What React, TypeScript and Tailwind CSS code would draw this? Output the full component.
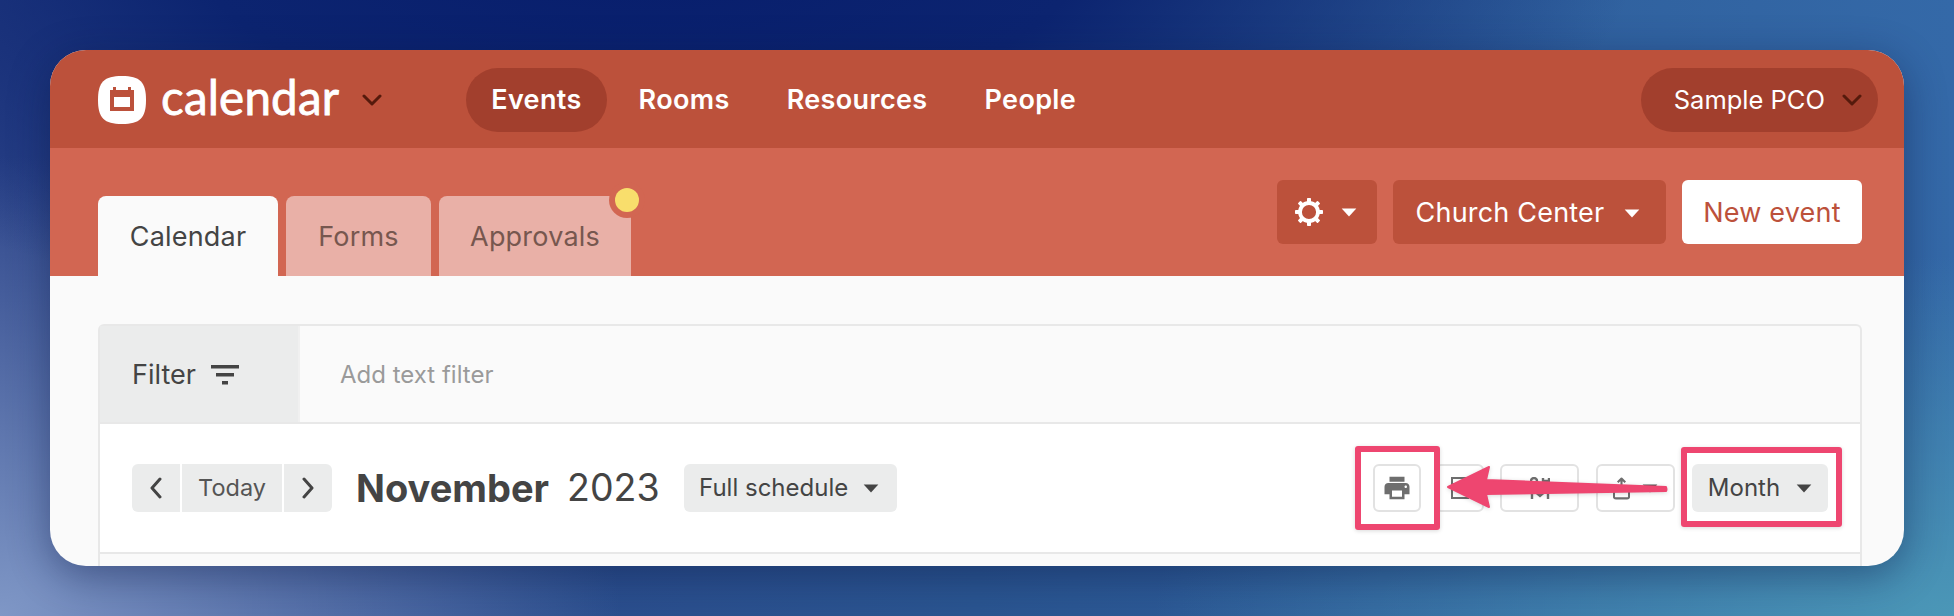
import React from "react";
import { MdPrint } from "react-icons/md";

const font = { fontFamily: "Inter, 'Liberation Sans', sans-serif" };

function Caret({ className }: { className: string }) {
  return (
    <svg viewBox="0 0 14 8" className={className} fill="currentColor">
      <path d="M0.5 0.5h13L7 7.5z" />
    </svg>
  );
}

function Chevron({ className }: { className: string }) {
  return (
    <svg viewBox="0 0 20 12" className={className} fill="none" stroke="currentColor" strokeWidth="3" strokeLinecap="round" strokeLinejoin="round">
      <path d="M2 2l8 8 8-8" />
    </svg>
  );
}

function Gear({ className }: { className: string }) {
  const angles = [0, 45, 90, 135, 180, 225, 270, 315];
  return (
    <svg viewBox="0 0 28 28" className={className} fill="currentColor">
      <circle cx="14" cy="14" r="9" fill="none" stroke="currentColor" strokeWidth="3.8" />
      {angles.map((a) => (
        <rect key={a} x="12" y="0" width="4" height="4.5" rx="0.8" transform={`rotate(${a} 14 14)`} />
      ))}
    </svg>
  );
}

function NavItem({ label, active }: { label: string; active?: boolean }) {
  return (
    <div className={`flex h-16 items-center rounded-full px-[25px] text-[27px] font-semibold tracking-[0.35px] text-white ${active ? "bg-[#a23f2d]" : ""}`}>
      {label}
    </div>
  );
}

function Tab({ label, className, children }: { label: string; className: string; children?: React.ReactNode }) {
  return (
    <div className={`relative flex h-20 items-center justify-center rounded-t-[8px] pt-[2px] text-[27px] tracking-[0.2px] ${className}`}>
      {label}
      {children}
    </div>
  );
}

function OutlineBtn({ className, children }: { className: string; children: React.ReactNode }) {
  return (
    <div className={`flex h-12 items-center justify-center rounded-[6px] border-2 border-[#e2e2e2] bg-white text-[#6e6e6e] ${className}`}>
      {children}
    </div>
  );
}

export default function App() {
  return (
    <div
      style={font}
      className="h-[616px] w-[1954px] overflow-hidden bg-[radial-gradient(ellipse_1000px_400px_at_640px_-60px,#071d6c_0%,#0c2470_45%,rgba(12,36,112,0)_100%),radial-gradient(ellipse_620px_460px_at_0px_616px,#7f97c6_0%,rgba(127,151,198,0)_100%),radial-gradient(ellipse_800px_360px_at_1954px_616px,#4b97b7_0%,rgba(75,151,183,0)_100%),linear-gradient(90deg,#2c4489_0%,#2a5590_50%,#3469a8_100%)] pt-[50px]"
    >
      <div className="relative mx-[50px] flex h-[516px] w-[1854px] flex-col overflow-hidden rounded-[36px] bg-[#fafafa] shadow-[0_10px_40px_rgba(10,25,70,0.45)]">
        {/* top nav */}
        <div className="flex h-[98px] shrink-0 items-center bg-[#bc513b] pl-[48px] pr-[26px] pt-[2px]">
          <svg viewBox="0 0 48 48" className="h-12 w-12 shrink-0">
            <path fill="#ffffff" d="M24 0C42 0 48 6 48 24C48 42 42 48 24 48C6 48 0 42 0 24C0 6 6 0 24 0Z" />
            <path fill="#bc513b" fillRule="evenodd" d="M15 11h3v3h12v-3h3v3h3v21H12V14h3zM16 21v10h16V21z" />
          </svg>
          <div className="mb-[6px] ml-[15px] text-[47.5px] font-normal leading-none tracking-[0.2px] text-white [-webkit-text-stroke:0.8px_white]" style={{ fontFamily: "Lato, sans-serif" }}>
            calendar
          </div>
          <Chevron className="ml-[23px] h-3 w-5 text-[#551a0c]" />
          <div className="ml-[84px] flex gap-[7px]">
            <NavItem label="Events" active />
            <NavItem label="Rooms" />
            <NavItem label="Resources" />
            <NavItem label="People" />
          </div>
          <div className="ml-auto flex h-16 items-center rounded-full bg-[#a23f2d] pl-[33px] pr-4 text-[25.5px] text-white">
            Sample PCO
            <Chevron className="ml-[17px] h-3 w-5 text-[#551a0c]" />
          </div>
        </div>

        {/* sub header */}
        <div className="flex h-[128px] shrink-0 items-end justify-between bg-[#d26652] pl-[48px] pr-[42px]">
          <div className="flex gap-2">
            <Tab label="Calendar" className="w-[180px] bg-[#fafafa] text-[#444444]" />
            <Tab label="Forms" className="w-[145px] bg-[#e9b0a7] text-[#77574f]" />
            <Tab label="Approvals" className="w-[192px] bg-[#e9b0a7] text-[#77574f]">
              <span className="absolute right-[-14px] top-[-14px] flex h-9 w-9 items-center justify-center rounded-full bg-[#d26652]">
                <span className="h-6 w-6 rounded-full bg-[#f8de6c]" />
              </span>
            </Tab>
          </div>
          <div className="mb-8 flex gap-4">
            <div className="flex h-16 w-[100px] items-center justify-center gap-[18px] rounded-[6px] bg-[#bc513b] pr-[2px] text-white">
              <Gear className="h-[28px] w-[28px]" />
              <Caret className="h-[9px] w-4" />
            </div>
            <div className="flex h-16 w-[273px] items-center justify-center gap-5 rounded-[6px] bg-[#bc513b] pr-[3px] pt-[2px] text-[27px] tracking-[0.2px] text-white">
              Church Center
              <Caret className="h-[9px] w-4" />
            </div>
            <div className="flex h-16 w-[180px] items-center justify-center rounded-[6px] bg-white pt-[2px] text-[27px] tracking-[0.2px] text-[#bc513b]">
              New event
            </div>
          </div>
        </div>

        {/* content */}
        <div className="flex-1 pl-[48px] pr-[42px] pt-12">
          <div className="h-[300px] rounded-t-[6px] border-2 border-b-0 border-[#e8e8e8]">
            <div className="flex h-[98px] border-b-2 border-[#e8e8e8]">
              <div className="flex w-[200px] items-center gap-[15px] border-r-2 border-[#f0f0f0] bg-[#ebecec] pl-[32px] pt-[2px] text-[27px] text-[#444444]">
                Filter
                <svg viewBox="0 0 28 20" className="h-5 w-7" fill="currentColor">
                  <rect x="0" y="0" width="28" height="3.5" />
                  <rect x="5" y="8" width="18" height="3.5" />
                  <rect x="11" y="16" width="6" height="3.5" />
                </svg>
              </div>
              <div className="flex items-center pl-[40px] pt-[2px] text-[24px] text-[#9a9a9a]">Add text filter</div>
            </div>
            <div className="flex h-[130px] items-center border-b-2 border-[#e8e8e8] bg-white pl-[32px] pr-[32px] text-[#444444]">
              <div className="flex h-12 gap-[2px] overflow-hidden rounded-[6px]">
                <div className="flex w-12 items-center justify-center bg-[#ebecec]">
                  <svg viewBox="0 0 12 22" className="h-[22px] w-3" fill="none" stroke="currentColor" strokeWidth="3" strokeLinecap="round" strokeLinejoin="round"><path d="M10 2L2 11l8 9" /></svg>
                </div>
                <div className="flex w-[100px] items-center justify-center bg-[#ebecec] text-[23.5px] text-[#555555]">Today</div>
                <div className="flex w-12 items-center justify-center bg-[#ebecec]">
                  <svg viewBox="0 0 12 22" className="h-[22px] w-3" fill="none" stroke="currentColor" strokeWidth="3" strokeLinecap="round" strokeLinejoin="round"><path d="M2 2l8 9-8 9" /></svg>
                </div>
              </div>
              <div className="ml-[24px] text-[38px] font-bold">November</div>
              <div className="ml-[18px] text-[37.5px]">2023</div>
              <div className="ml-[24px] flex h-12 w-[213px] items-center justify-center gap-[15px] rounded-[6px] bg-[#ebecec] pr-[2px] text-[24px]">
                Full schedule
                <Caret className="h-[9px] w-4" />
              </div>
              <div className="ml-auto flex items-center gap-[14px]">
                <OutlineBtn className="w-12">
                  <MdPrint className="h-[30px] w-[30px]" />
                </OutlineBtn>
                <OutlineBtn className="w-[49px]">
                  <svg viewBox="0 0 18 22" className="h-[22px] w-[18px]" fill="none" stroke="currentColor" strokeWidth="2"><rect x="1" y="1" width="16" height="20" /><path d="M1 7h16" /></svg>
                </OutlineBtn>
                <OutlineBtn className="ml-[2px] w-[79px]">
                  <svg viewBox="0 0 20 22" className="h-[22px] w-5" fill="none" stroke="currentColor" strokeWidth="2.4"><path d="M1 7V4a3 3 0 0 1 6 0v3M13 1v7M19 1v7M13 4h6" /><path d="M2 22V12l8 7 8-7v10" /></svg>
                </OutlineBtn>
                <OutlineBtn className="ml-[3px] w-[79px] gap-3">
                  <svg viewBox="0 0 18 24" className="h-6 w-[17px]" fill="none" stroke="currentColor" strokeWidth="2.2" strokeLinejoin="round"><path d="M9 16V2M5 6l4-4 4 4M5 10H3a2 2 0 0 0-2 2v9a2 2 0 0 0 2 2h12a2 2 0 0 0 2-2v-9a2 2 0 0 0-2-2h-2" /></svg>
                  <Caret className="h-[9px] w-4 text-[#555555]" />
                </OutlineBtn>
                <div className="ml-[3px] flex h-12 w-[136px] items-center justify-center gap-4 rounded-[6px] bg-[#ebecec] text-[24px]">
                  Month
                  <Caret className="h-[9px] w-4" />
                </div>
              </div>
            </div>
          </div>
        </div>

        {/* annotations */}
        <div className="absolute left-[1305px] top-[396px] h-[84px] w-[85px] rounded-[3px] border-[6px] border-[#ee4670] shadow-[0_1px_4px_rgba(0,0,0,0.15)]" />
        <div className="absolute left-[1631px] top-[397px] h-[80px] w-[161px] rounded-[3px] border-[6px] border-[#ee4670] shadow-[0_1px_4px_rgba(0,0,0,0.15)]" />
        <svg className="absolute left-[1390px] top-[410px] h-[50px] w-[240px]" viewBox="0 0 240 50" style={{ filter: "drop-shadow(0 1px 2px rgba(0,0,0,0.15))" }}>
          <path fill="#ee4670" stroke="#ee4670" strokeWidth="2" strokeLinejoin="round" d="M8 27L49 7 46 20 226 27Q227 30 226 31L46 34 49 47z" />
        </svg>
      </div>
    </div>
  );
}
